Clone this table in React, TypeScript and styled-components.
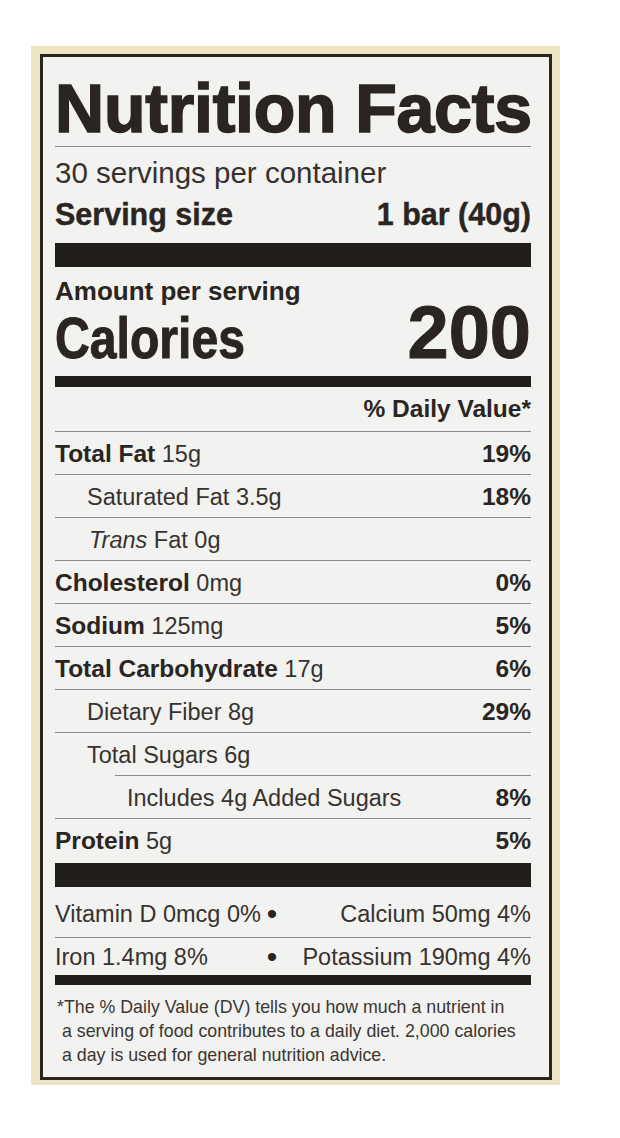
import React from "react";
import styled, { createGlobalStyle } from "styled-components";

const GlobalStyle = createGlobalStyle`
  html, body { margin: 0; padding: 0; background: #ffffff; }
  body {
    font-family: "Liberation Sans", Arial, sans-serif;
    color: #2a2521;
  }
`;

const Page = styled.div`
  padding: 46px 0 0 31px;
`;

const Frame = styled.div`
  width: 529px;
  box-sizing: border-box;
  background: #eee5c4;
  padding: 8px 8px 5px 9px;
`;

const Label = styled.section`
  border: 3px solid #2b2521;
  background: #f2f2f0;
  padding: 0 18px 10px 12px;
`;

const Title = styled.h1`
  margin: 0;
  padding-top: 17px;
  font-size: 68px;
  line-height: 68px;
  font-weight: 700;
  letter-spacing: -0.2px;
  white-space: nowrap;
  -webkit-text-stroke: 1.6px #2a2521;
`;

const Rule = styled.div<{ $mt?: number; $inset?: number }>`
  height: 1px;
  background: #8b8a88;
  margin-top: ${(p) => p.$mt ?? 0}px;
  margin-left: ${(p) => p.$inset ?? 0}px;
`;

const Bar = styled.div<{ $h: number; $mt?: number }>`
  height: ${(p) => p.$h}px;
  margin-top: ${(p) => p.$mt ?? 0}px;
  background: #221e1b;
`;

const Servings = styled.div`
  margin-top: 6px;
  font-size: 29.5px;
  line-height: 40px;
  color: #36312e;
`;

const ServingSize = styled.div`
  display: flex;
  justify-content: space-between;
  font-size: 30.5px;
  line-height: 42px;
  font-weight: 700;
  -webkit-text-stroke: 0.4px #2a2521;
`;

const Amount = styled.div`
  margin-top: 10px;
  font-size: 26px;
  line-height: 28px;
  font-weight: 700;
`;

const CaloriesRow = styled.div`
  margin-top: 1px;
  height: 56px;
  display: flex;
  justify-content: space-between;
  align-items: baseline;
  font-weight: 700;
  -webkit-text-stroke: 1px #2a2521;
`;

const CaloriesWord = styled.span`
  display: inline-block;
  font-size: 58px;
  line-height: 54px;
  transform: scaleX(0.83);
  transform-origin: left bottom;
`;

const CaloriesValue = styled.span`
  font-size: 74px;
  line-height: 54px;
`;

const DVHeader = styled.div`
  height: 44px;
  line-height: 44px;
  text-align: right;
  font-size: 24.5px;
  font-weight: 700;
`;

const Row = styled.div<{ $indent?: number; $inset?: number }>`
  display: flex;
  justify-content: space-between;
  align-items: baseline;
  height: 40px;
  padding-top: 2px;
  line-height: 40px;
  border-top: 1px solid #8b8a88;
  margin-left: ${(p) => p.$inset ?? 0}px;
  padding-left: ${(p) => p.$indent ?? 0}px;
`;

const Name = styled.span`
  white-space: nowrap;
  font-size: 23.5px;
  color: #37322f;
`;

const Strong = styled.b`
  font-size: 24.5px;
  font-weight: 700;
  color: #2a2521;
`;

const Pct = styled.span`
  font-size: 24.5px;
  font-weight: 700;
`;

const Mineral = styled.div<{ $pt: number; $lh: number }>`
  display: grid;
  grid-template-columns: 207px 20px 1fr;
  padding-top: ${(p) => p.$pt}px;
  line-height: ${(p) => p.$lh}px;
  font-size: 23.5px;
  color: #37322f;
  white-space: nowrap;
`;

const Dot = styled.span`
  text-align: center;
  font-size: 30px;
  color: #2a2521;
`;

const Right = styled.span`
  text-align: right;
`;

const Footnote = styled.p`
  margin: 10px 0 0;
  padding-left: 7px;
  text-indent: -5px;
  font-size: 17.8px;
  line-height: 24px;
  color: #3a3633;
`;

type Nutrient = {
  name: React.ReactNode;
  amount: string;
  pct?: string;
  bold?: boolean;
  indent?: number;
  inset?: number;
};

const nutrients: Nutrient[] = [
  { name: "Total Fat", amount: "15g", pct: "19%", bold: true },
  { name: "Saturated Fat", amount: "3.5g", pct: "18%", indent: 32 },
  { name: <><i>Trans</i> Fat</>, amount: "0g", indent: 34 },
  { name: "Cholesterol", amount: "0mg", pct: "0%", bold: true },
  { name: "Sodium", amount: "125mg", pct: "5%", bold: true },
  { name: "Total Carbohydrate", amount: "17g", pct: "6%", bold: true },
  { name: "Dietary Fiber", amount: "8g", pct: "29%", indent: 32 },
  { name: "Total Sugars", amount: "6g", indent: 32 },
  { name: "Includes 4g Added Sugars", amount: "", pct: "8%", indent: 12, inset: 60 },
  { name: "Protein", amount: "5g", pct: "5%", bold: true },
];

export default function App() {
  return (
    <>
      <GlobalStyle />
      <Page>
        <Frame>
          <Label>
            <Title>Nutrition Facts</Title>
            <Rule $mt={4} />
            <Servings>30 servings per container</Servings>
            <ServingSize>
              <span>Serving size</span>
              <span>1 bar (40g)</span>
            </ServingSize>
            <Bar $h={24} $mt={8} />
            <Amount>Amount per serving</Amount>
            <CaloriesRow>
              <CaloriesWord>Calories</CaloriesWord>
              <CaloriesValue>200</CaloriesValue>
            </CaloriesRow>
            <Bar $h={11} $mt={14} />
            <DVHeader>% Daily Value*</DVHeader>
            {nutrients.map((n, i) => (
              <Row key={i} $indent={n.indent} $inset={n.inset}>
                <Name>
                  {n.bold ? <Strong>{n.name}</Strong> : n.name}
                  {n.amount ? ` ${n.amount}` : ""}
                </Name>
                {n.pct ? <Pct>{n.pct}</Pct> : null}
              </Row>
            ))}
            <Bar $h={24} $mt={2} />
            <Mineral $pt={4} $lh={46}>
              <span>Vitamin D 0mcg 0%</span>
              <Dot>•</Dot>
              <Right>Calcium 50mg 4%</Right>
            </Mineral>
            <Rule />
            <Mineral $pt={1} $lh={36}>
              <span>Iron 1.4mg 8%</span>
              <Dot>•</Dot>
              <Right>Potassium 190mg 4%</Right>
            </Mineral>
            <Bar $h={10} />
            <Footnote>
              *The % Daily Value (DV) tells you how much a nutrient in
              <br />
              a serving of food contributes to a daily diet. 2,000 calories
              <br />
              a day is used for general nutrition advice.
            </Footnote>
          </Label>
        </Frame>
      </Page>
    </>
  );
}
